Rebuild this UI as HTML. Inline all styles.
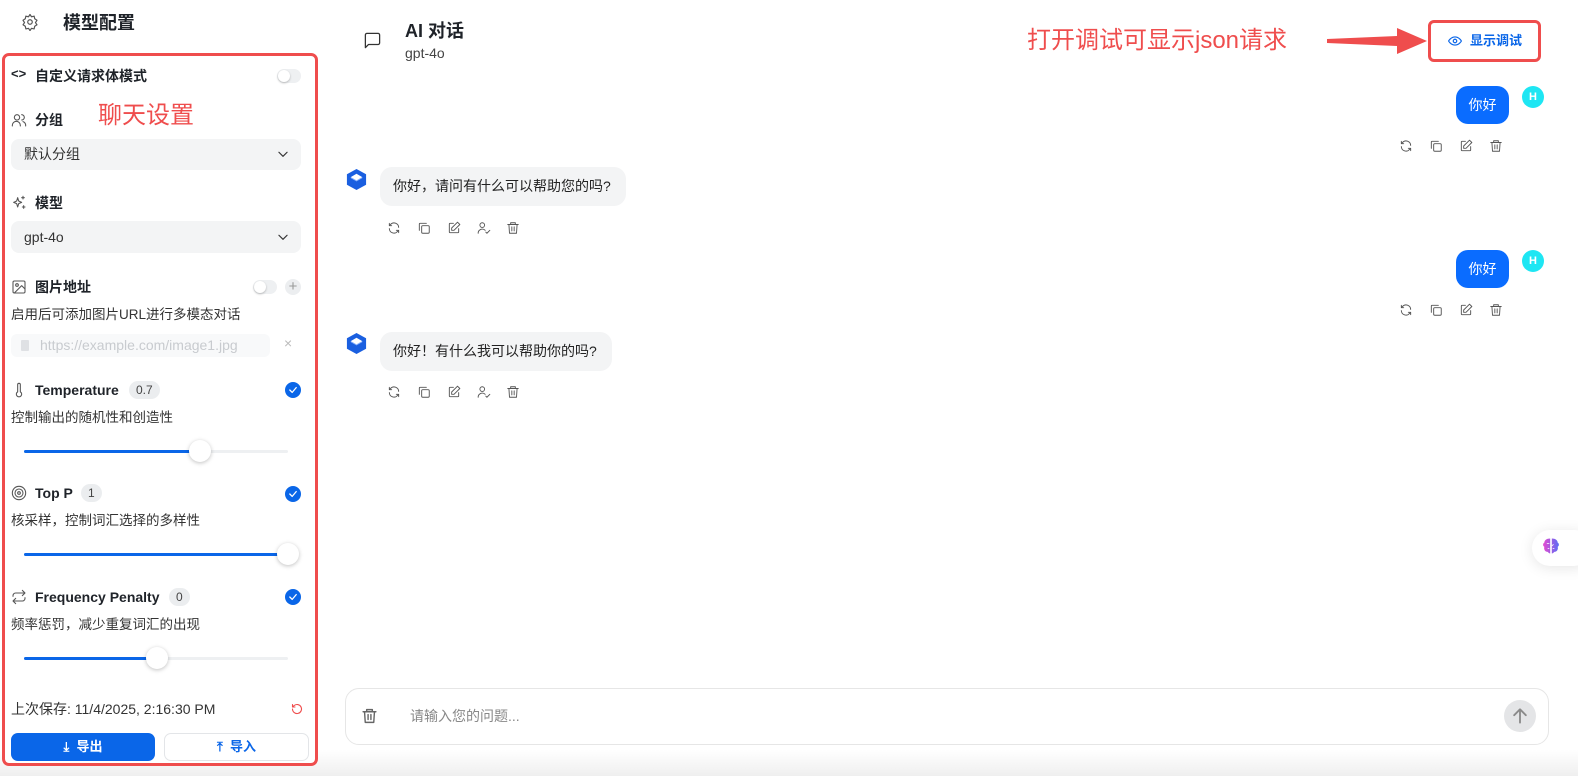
<!DOCTYPE html>
<html><head><meta charset="utf-8"><style>
*{box-sizing:border-box;margin:0;padding:0}
body{width:1578px;height:776px;overflow:hidden;background:#fff;font-family:"Liberation Sans","Noto Sans CJK SC",sans-serif;color:#1f2329;position:relative}
.a{position:absolute;white-space:nowrap}
.lbl{font-size:14px;font-weight:bold;line-height:20px}
.desc{font-size:13.5px;line-height:20px;color:#333}
.sel{position:absolute;left:11px;width:290px;height:31px;background:#f3f4f5;border-radius:8px;font-size:14px;line-height:31px;padding-left:13px;color:#333}
.tog{position:absolute;width:24px;height:14px;border-radius:7px;background:#eef0f2}
.tog:after{content:"";position:absolute;left:1px;top:1px;width:12px;height:12px;border-radius:50%;background:#fff;box-shadow:0 1px 2px rgba(0,0,0,.25)}
.chk{position:absolute;width:16px;height:16px;border-radius:50%;background:#0a66e8}
.badge{position:absolute;height:18px;border-radius:9px;background:#ebedef;font-size:12px;line-height:18px;padding:0 7px;color:#444}
.track{position:absolute;left:24px;width:264px;height:3px;background:#eef0f2;border-radius:2px}
.fill{position:absolute;left:0;top:0;height:3px;background:#0a66e8;border-radius:2px}
.thumb{position:absolute;width:22px;height:22px;border-radius:50%;background:#fff;box-shadow:0 1px 4px rgba(0,0,0,.25);top:-10px}
.ub{position:absolute;background:#0a6cff;color:#fff;border-radius:12px;font-size:14px;text-align:center;line-height:38px;height:38px;width:53px;left:1456px}
.av{position:absolute;left:1522px;width:22px;height:22px;border-radius:50%;background:#1ee6f3;color:#fff;font-size:11px;font-weight:bold;text-align:center;line-height:22px}
.ab{position:absolute;left:380px;background:#f3f4f5;border-radius:12px;height:39px;line-height:39px;padding-left:13px;font-size:14px;color:#222}
svg.i{position:absolute;fill:none;stroke:#555;stroke-width:1.6;stroke-linecap:round;stroke-linejoin:round}
</style></head><body>
<div class="a" style="left:0;top:750px;width:1578px;height:26px;background:linear-gradient(#fff,#efefef)"></div>

<!-- sidebar header -->
<svg class="i" style="left:21px;top:13px" width="18" height="18" viewBox="0 0 24 24"><circle cx="12" cy="12" r="3"/><path d="M12 2l2 3 3.5-.8.8 3.5 3 2-2 3 2 3-3 2-.8 3.5-3.5-.8-2 3-2-3-3.5.8-.8-3.5-3-2 2-3-2-3 3-2 .8-3.5 3.5.8z"/></svg>
<div class="a" style="left:63px;top:11px;font-size:18px;font-weight:bold;line-height:24px">模型配置</div>

<div class="a" style="left:2px;top:53px;width:316px;height:713px;border:3px solid #ef4d4d;border-radius:7px;background:#fff"></div>

<div class="a" style="left:11px;top:66px;font-size:13px;font-weight:bold">&lt;&gt;</div>
<div class="a lbl" style="left:35px;top:66px">自定义请求体模式</div>
<div class="tog" style="left:277px;top:69px"></div>
<div class="a" style="left:98px;top:101px;font-size:24px;color:#ef4d4d;line-height:30px">聊天设置</div>

<svg class="i" style="left:11px;top:112px" width="16" height="16" viewBox="0 0 24 24"><circle cx="9" cy="8" r="4"/><path d="M2 21v-1a6 6 0 0 1 12 0v1M16 4a4 4 0 0 1 0 8M22 21v-1a6 6 0 0 0-4-5.6"/></svg>
<div class="a lbl" style="left:35px;top:110px">分组</div>
<div class="sel" style="top:139px">默认分组</div>
<svg class="i" style="left:276px;top:147px;stroke:#333;stroke-width:2" width="14" height="14" viewBox="0 0 24 24"><path d="M5 9l7 7 7-7"/></svg>

<svg class="i" style="left:11px;top:195px" width="16" height="16" viewBox="0 0 24 24"><path d="M10 4l1.5 5L16 11l-4.5 2L10 18l-1.5-5L4 11l4.5-2zM18 2v4M16 4h4M19 16v4M17 18h4"/></svg>
<div class="a lbl" style="left:35px;top:193px">模型</div>
<div class="sel" style="top:221px;height:32px;line-height:32px">gpt-4o</div>
<svg class="i" style="left:276px;top:230px;stroke:#333;stroke-width:2" width="14" height="14" viewBox="0 0 24 24"><path d="M5 9l7 7 7-7"/></svg>

<svg class="i" style="left:11px;top:279px" width="16" height="16" viewBox="0 0 24 24"><rect x="3" y="3" width="18" height="18" rx="2"/><circle cx="9" cy="9" r="2"/><path d="M21 15l-5-5L5 21"/></svg>
<div class="a lbl" style="left:35px;top:277px">图片地址</div>
<div class="tog" style="left:253px;top:280px"></div>
<div class="a" style="left:285px;top:279px;width:16px;height:16px;border-radius:50%;background:#eceef0;color:#999;font-size:15px;line-height:16px;text-align:center">+</div>
<div class="a desc" style="left:11px;top:305px">启用后可添加图片URL进行多模态对话</div>
<div class="a" style="left:11px;top:334px;width:259px;height:23px;background:#f8f9fa;border-radius:6px;font-size:14px;color:#c8cbcf;line-height:23px;padding-left:29px">https://example.com/image1.jpg</div>
<div class="a" style="left:21px;top:340px;width:8px;height:11px;background:#dfe1e4;border-radius:1px"></div>
<div class="a" style="left:284px;top:335px;color:#bbb;font-size:14px">×</div>

<!-- Temperature -->
<svg class="i" style="left:11px;top:382px" width="16" height="16" viewBox="0 0 24 24"><path d="M14 14.8V4a2 2 0 0 0-4 0v10.8a4 4 0 1 0 4 0z"/></svg>
<div class="a lbl" style="left:35px;top:380px">Temperature</div>
<div class="badge" style="left:129px;top:381px">0.7</div>
<div class="chk" style="left:285px;top:382px"></div>
<svg class="i" style="left:289px;top:386px;stroke:#fff;stroke-width:1.6" width="8" height="8" viewBox="0 0 10 10"><path d="M1 5l3 3 5-6"/></svg>
<div class="a desc" style="left:11px;top:408px">控制输出的随机性和创造性</div>
<div class="track" style="top:450px"><div class="fill" style="width:176px"></div><div class="thumb" style="left:165px"></div></div>

<!-- Top P -->
<svg class="i" style="left:11px;top:485px" width="16" height="16" viewBox="0 0 24 24"><circle cx="12" cy="12" r="10"/><circle cx="12" cy="12" r="6"/><circle cx="12" cy="12" r="2"/></svg>
<div class="a lbl" style="left:35px;top:483px">Top P</div>
<div class="badge" style="left:81px;top:484px">1</div>
<div class="chk" style="left:285px;top:486px"></div>
<svg class="i" style="left:289px;top:490px;stroke:#fff;stroke-width:1.6" width="8" height="8" viewBox="0 0 10 10"><path d="M1 5l3 3 5-6"/></svg>
<div class="a desc" style="left:11px;top:511px">核采样，控制词汇选择的多样性</div>
<div class="track" style="top:553px"><div class="fill" style="width:264px"></div><div class="thumb" style="left:253px"></div></div>

<!-- Frequency -->
<svg class="i" style="left:11px;top:589px" width="16" height="16" viewBox="0 0 24 24"><path d="M17 2l4 4-4 4M3 11v-1a4 4 0 0 1 4-4h14M7 22l-4-4 4-4M21 13v1a4 4 0 0 1-4 4H3"/></svg>
<div class="a lbl" style="left:35px;top:587px">Frequency Penalty</div>
<div class="badge" style="left:169px;top:588px">0</div>
<div class="chk" style="left:285px;top:589px"></div>
<svg class="i" style="left:289px;top:593px;stroke:#fff;stroke-width:1.6" width="8" height="8" viewBox="0 0 10 10"><path d="M1 5l3 3 5-6"/></svg>
<div class="a desc" style="left:11px;top:615px">频率惩罚，减少重复词汇的出现</div>
<div class="track" style="top:657px"><div class="fill" style="width:133px"></div><div class="thumb" style="left:122px"></div></div>

<div class="a" style="left:11px;top:699px;font-size:14px;line-height:20px;color:#333">上次保存: 11/4/2025, 2:16:30 PM</div>
<svg class="i" style="left:291px;top:703px;stroke:#ef4d4d;stroke-width:2.2" width="12" height="12" viewBox="0 0 24 24"><path d="M3 12a9 9 0 1 0 3-6.7L3 8M3 3v5h5"/></svg>
<div class="a" style="left:11px;top:733px;width:144px;height:28px;background:#0a66e8;border-radius:7px;color:#fff;font-size:13px;font-weight:bold;text-align:center;line-height:28px">⤓&nbsp; 导出</div>
<div class="a" style="left:164px;top:733px;width:145px;height:28px;border:1px solid #e3e5e8;border-radius:7px;color:#0a66e8;font-size:13px;font-weight:bold;text-align:center;line-height:26px;background:#fff">⤒&nbsp; 导入</div>

<!-- main header -->
<svg class="i" style="left:363px;top:31px;stroke:#333" width="19" height="19" viewBox="0 0 24 24"><path d="M21 15a2 2 0 0 1-2 2H7l-4 4V5a2 2 0 0 1 2-2h14a2 2 0 0 1 2 2z"/></svg>
<div class="a" style="left:405px;top:20px;font-size:18px;font-weight:bold;line-height:22px">AI 对话</div>
<div class="a" style="left:405px;top:44px;font-size:14px;color:#444;line-height:18px">gpt-4o</div>

<div class="a" style="left:1027px;top:25px;font-size:24px;color:#ef4d4d;line-height:32px">打开调试可显示json请求</div>
<svg class="a" style="left:1325px;top:26px" width="104" height="30" viewBox="0 0 104 30"><path d="M2 13L72 10V2L102 15L72 28V20L2 17Z" fill="#ef4d4d"/></svg>
<div class="a" style="left:1428px;top:20px;width:113px;height:42px;border:3px solid #ef4d4d;border-radius:6px"></div>
<svg class="i" style="left:1448px;top:34px;stroke:#0a66e8;stroke-width:2" width="14" height="14" viewBox="0 0 24 24"><path d="M1 12s4-7 11-7 11 7 11 7-4 7-11 7S1 12 1 12z"/><circle cx="12" cy="12" r="3"/></svg>
<div class="a" style="left:1470px;top:32px;font-size:13px;font-weight:bold;color:#0a66e8;line-height:18px">显示调试</div>

<!-- messages -->
<div class="ub" style="top:86px">你好</div><div class="av" style="top:86px">H</div>
<div class="ub" style="top:250px">你好</div><div class="av" style="top:250px">H</div>

<svg class="a" style="left:345px;top:168px" width="23" height="23" viewBox="0 0 24 24"><path d="M12 1l10 5.5v11L12 23 2 17.5v-11z" fill="#1a5fe0"/><path d="M12 6l6 3.5-6 3.5-6-3.5z" fill="#fff"/><path d="M6 9.5v1L12 14l6-3.5v-1L12 13z" fill="#8fb6ff"/></svg>
<div class="ab" style="top:167px;width:246px">你好，请问有什么可以帮助您的吗?</div>
<svg class="a" style="left:345px;top:332px" width="23" height="23" viewBox="0 0 24 24"><path d="M12 1l10 5.5v11L12 23 2 17.5v-11z" fill="#1a5fe0"/><path d="M12 6l6 3.5-6 3.5-6-3.5z" fill="#fff"/><path d="M6 9.5v1L12 14l6-3.5v-1L12 13z" fill="#8fb6ff"/></svg>
<div class="ab" style="top:332px;width:232px">你好！有什么我可以帮助你的吗?</div>

<!-- action icon rows -->
<svg class="a" width="0" height="0"><defs>
<g id="r"><path d="M20 11a8 8 0 0 0-14-5L4 8M4 4v4h4M4 13a8 8 0 0 0 14 5l2-2M20 20v-4h-4"/></g>
<g id="c"><rect x="8" y="8" width="13" height="13" rx="2"/><path d="M4 16V5a1 1 0 0 1 1-1h11"/></g>
<g id="e"><path d="M11 4H5a1 1 0 0 0-1 1v14a1 1 0 0 0 1 1h14a1 1 0 0 0 1-1v-6"/><path d="M18 2l4 4-10 10H8v-4z"/></g>
<g id="p"><circle cx="9" cy="7" r="4"/><path d="M2 21a7 7 0 0 1 12-5M15 19l2 2 5-5"/></g>
<g id="t"><path d="M3 6h18M8 6V3h8v3M5 6l1 15h12l1-15M10 10v7M14 10v7"/></g>
</defs></svg>

<svg class="i" style="left:1399px;top:139px" width="14" height="14" viewBox="0 0 24 24"><use href="#r"/></svg>
<svg class="i" style="left:1429px;top:139px" width="14" height="14" viewBox="0 0 24 24"><use href="#c"/></svg>
<svg class="i" style="left:1459px;top:139px" width="14" height="14" viewBox="0 0 24 24"><use href="#e"/></svg>
<svg class="i" style="left:1489px;top:139px" width="14" height="14" viewBox="0 0 24 24"><use href="#t"/></svg>

<svg class="i" style="left:1399px;top:303px" width="14" height="14" viewBox="0 0 24 24"><use href="#r"/></svg>
<svg class="i" style="left:1429px;top:303px" width="14" height="14" viewBox="0 0 24 24"><use href="#c"/></svg>
<svg class="i" style="left:1459px;top:303px" width="14" height="14" viewBox="0 0 24 24"><use href="#e"/></svg>
<svg class="i" style="left:1489px;top:303px" width="14" height="14" viewBox="0 0 24 24"><use href="#t"/></svg>

<svg class="i" style="left:387px;top:221px" width="14" height="14" viewBox="0 0 24 24"><use href="#r"/></svg>
<svg class="i" style="left:417px;top:221px" width="14" height="14" viewBox="0 0 24 24"><use href="#c"/></svg>
<svg class="i" style="left:447px;top:221px" width="14" height="14" viewBox="0 0 24 24"><use href="#e"/></svg>
<svg class="i" style="left:477px;top:221px" width="14" height="14" viewBox="0 0 24 24"><use href="#p"/></svg>
<svg class="i" style="left:506px;top:221px" width="14" height="14" viewBox="0 0 24 24"><use href="#t"/></svg>

<svg class="i" style="left:387px;top:385px" width="14" height="14" viewBox="0 0 24 24"><use href="#r"/></svg>
<svg class="i" style="left:417px;top:385px" width="14" height="14" viewBox="0 0 24 24"><use href="#c"/></svg>
<svg class="i" style="left:447px;top:385px" width="14" height="14" viewBox="0 0 24 24"><use href="#e"/></svg>
<svg class="i" style="left:477px;top:385px" width="14" height="14" viewBox="0 0 24 24"><use href="#p"/></svg>
<svg class="i" style="left:506px;top:385px" width="14" height="14" viewBox="0 0 24 24"><use href="#t"/></svg>

<!-- floating brain -->
<div class="a" style="left:1532px;top:530px;width:60px;height:36px;border-radius:18px;background:#fff;box-shadow:0 2px 14px rgba(0,0,0,.10)"></div>
<svg class="a" style="left:1541px;top:536px" width="20" height="20" viewBox="0 0 24 24"><defs><linearGradient id="g" x1="0" x2="1"><stop offset="0" stop-color="#e64bd0"/><stop offset="1" stop-color="#5b6cf5"/></linearGradient></defs><path d="M11 3C7 3 4 5 4 8c-2 1-2 4 0 5-1 3 1 6 4 6 1 1 2 2 3 2zM13 3c4 0 7 2 7 5 2 1 2 4 0 5 1 3-1 6-4 6-1 1-2 2-3 2z" fill="url(#g)"/><path d="M7 9h3M15 10l-2 2M8 15h2M16 15h-2" stroke="#fff" stroke-width="1"/></svg>

<!-- bottom input -->
<div class="a" style="left:345px;top:688px;width:1204px;height:57px;border:1px solid #e6e6e6;border-radius:14px;background:#fff"></div>
<svg class="i" style="left:361px;top:707px;stroke:#666;stroke-width:2" width="17" height="18" viewBox="0 0 24 24"><path d="M3 6h18M8 6V3h8v3M5 6l1 15h12l1-15M10 10v7M14 10v7"/></svg>
<div class="a" style="left:410px;top:706px;font-size:14px;color:#888;line-height:20px">请输入您的问题...</div>
<div class="a" style="left:1504px;top:700px;width:32px;height:32px;border-radius:50%;background:#e4e5e7"></div>
<svg class="i" style="left:1510px;top:706px;stroke:#8a8a8a;stroke-width:2.2" width="20" height="20" viewBox="0 0 24 24"><path d="M12 20V4M5 11l7-7 7 7"/></svg>
</body></html>
